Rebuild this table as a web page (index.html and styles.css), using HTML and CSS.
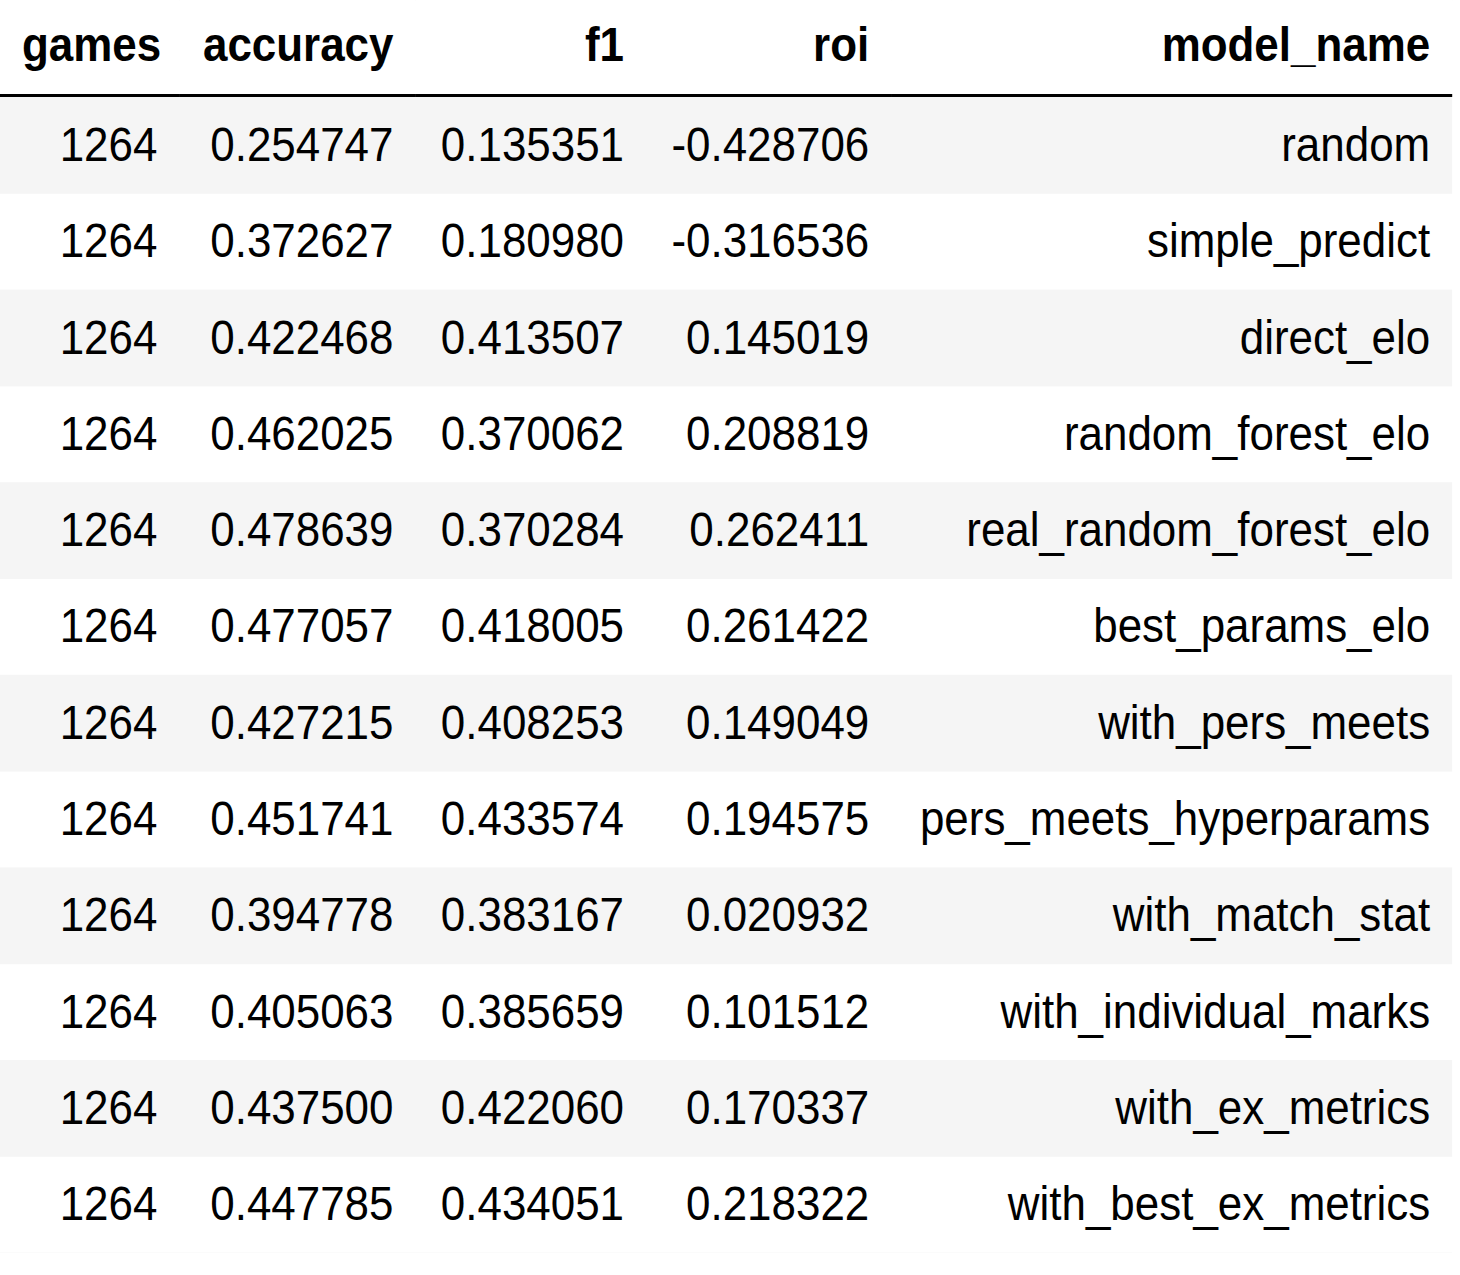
FILE: index.html
```html
<!DOCTYPE html>
<html>
<head>
<meta charset="utf-8">
<link rel="stylesheet" href="styles.css">
</head>
<body>
<div class="frame">
<table class="df">
  <thead>
    <tr><th class="col-games">games</th><th class="col-acc">accuracy</th><th class="col-f1">f1</th><th class="col-roi">roi</th><th class="col-name">model_name</th></tr>
  </thead>
  <tbody>
    <tr><td>1264</td><td>0.254747</td><td>0.135351</td><td>-0.428706</td><td>random</td></tr>
    <tr><td>1264</td><td>0.372627</td><td>0.180980</td><td>-0.316536</td><td>simple_predict</td></tr>
    <tr><td>1264</td><td>0.422468</td><td>0.413507</td><td>0.145019</td><td>direct_elo</td></tr>
    <tr><td>1264</td><td>0.462025</td><td>0.370062</td><td>0.208819</td><td>random_forest_elo</td></tr>
    <tr><td>1264</td><td>0.478639</td><td>0.370284</td><td>0.262411</td><td>real_random_forest_elo</td></tr>
    <tr><td>1264</td><td>0.477057</td><td>0.418005</td><td>0.261422</td><td>best_params_elo</td></tr>
    <tr><td>1264</td><td>0.427215</td><td>0.408253</td><td>0.149049</td><td>with_pers_meets</td></tr>
    <tr><td>1264</td><td>0.451741</td><td>0.433574</td><td>0.194575</td><td>pers_meets_hyperparams</td></tr>
    <tr><td>1264</td><td>0.394778</td><td>0.383167</td><td>0.020932</td><td>with_match_stat</td></tr>
    <tr><td>1264</td><td>0.405063</td><td>0.385659</td><td>0.101512</td><td>with_individual_marks</td></tr>
    <tr><td>1264</td><td>0.437500</td><td>0.422060</td><td>0.170337</td><td>with_ex_metrics</td></tr>
    <tr><td>1264</td><td>0.447785</td><td>0.434051</td><td>0.218322</td><td>with_best_ex_metrics</td></tr>
  </tbody>
</table>
</div>
</body>
</html>
```

FILE: styles.css
```css
html, body {
  margin: 0;
  padding: 0;
  background: #ffffff;
}
.frame {
  width: 100%;
  overflow: hidden;
}
.df {
  border-collapse: collapse;
  border: none;
  table-layout: fixed;
  width: 1587px;
  font-family: "Liberation Sans", Arial, sans-serif;
  font-size: 48px;
  line-height: 48px;
  color: #000000;
  transform: scaleX(0.915);
  transform-origin: 0 0;
  background-color: #ffffff;
  background-image: linear-gradient(to bottom, #f5f5f5 0, #f5f5f5 96.3px, #ffffff 96.3px, #ffffff 192.6px);
  background-size: 100% 192.6px;
  background-position: 0 97px;
  background-repeat: repeat-y;
}
.df th,
.df td {
  box-sizing: border-box;
  text-align: right;
  vertical-align: middle;
  white-space: nowrap;
  padding: 24px 24px;
  border: none;
}
.df td {
  line-height: 48.3px;
}
.df th {
  font-weight: bold;
  padding-top: 21px;
  padding-bottom: 25px;
  border-bottom: 3px solid #000000;
  background: #ffffff;
}
.col-games { width: 196px; }
.col-acc { width: 258px; }
.col-f1 { width: 252px; }
.col-roi { width: 268px; }
.col-name { width: 613px; }
```
